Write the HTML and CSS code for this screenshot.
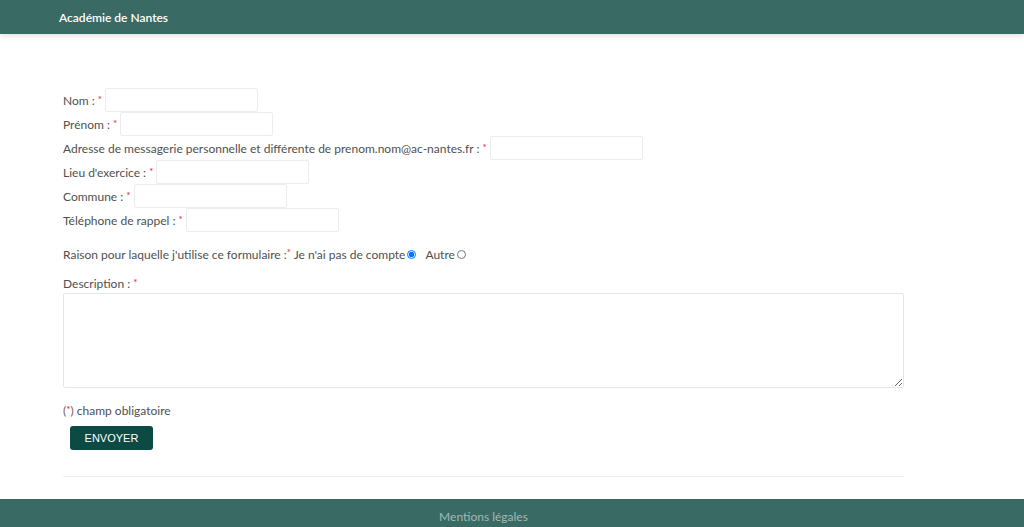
FILE: index.html
```html
<!DOCTYPE html>
<html lang="fr">
<head>
<meta charset="utf-8">
<title>Académie de Nantes</title>
<link rel="stylesheet" href="styles.css">
</head>
<body>
<header class="topbar">
  <span class="brand">Académie de Nantes</span>
</header>
<main class="page">
  <form class="form">
    <div class="row"><label>Nom : <span class="req">*</span></label><input type="text" class="field"></div>
    <div class="row"><label>Prénom : <span class="req">*</span></label><input type="text" class="field"></div>
    <div class="row"><label>Adresse de messagerie personnelle et différente de prenom.nom@ac-nantes.fr : <span class="req">*</span></label><input type="text" class="field"></div>
    <div class="row"><label>Lieu d'exercice : <span class="req">*</span></label><input type="text" class="field"></div>
    <div class="row"><label>Commune : <span class="req">*</span></label><input type="text" class="field"></div>
    <div class="row"><label>Téléphone de rappel : <span class="req">*</span></label><input type="text" class="field"></div>
    <div class="reason">Raison pour laquelle j'utilise ce formulaire :<span class="req">*</span> Je n'ai pas de compte<input type="radio" name="r" class="radio" checked><span class="opt">Autre</span><input type="radio" name="r" class="radio"></div>
    <div class="desc-label">Description : <span class="req">*</span></div>
    <textarea class="desc"></textarea>
    <div class="note"><span class="paren">(</span><span class="req">*</span><span class="paren">)</span> champ obligatoire</div>
    <div class="actions"><button type="button" class="send">ENVOYER</button></div>
    <hr class="sep">
  </form>
</main>
<footer class="footer"><div class="footer-inner"><span class="legal">Mentions légales</span></div></footer>
</body>
</html>
```
FILE: styles.css
```css
html, body {
  margin: 0;
  padding: 0;
  background: #fff;
  font-family: Lato, "Open Sans", sans-serif;
  font-size: 12px;
  color: #505050;
}
.topbar {
  height: 34px;
  background: #396a63;
  display: flex;
  align-items: center;
  padding-left: 59px;
  box-shadow: 0 2px 6px rgba(0,0,0,0.12);
  position: relative;
}
.brand {
  color: #fff;
  font-size: 12px;
  font-weight: 600;
}
.page {
  padding: 54px 0 0 63px;
  width: 841px;
}
.form {
  display: flex;
  flex-direction: column;
}
.row {
  display: flex;
  align-items: center;
  height: 24px;
}
.row label {
  white-space: pre;
  margin-right: 3px;
}
.req {
  color: #e0282a;
  font-size: 10px;
  position: relative;
  top: -2px;
}
.field {
  box-sizing: border-box;
  width: 153px;
  height: 24px;
  margin: 0;
  border: 1px solid #ececec;
  border-radius: 2px;
  background: #fff;
  padding: 0 4px;
  font: inherit;
}
.reason {
  display: flex;
  align-items: center;
  margin-top: 12px;
  height: 20px;
  white-space: pre;
}
.radio {
  width: 9px;
  height: 9px;
  margin: 0 3px 0 2px;
}
.opt {
  margin-left: 6px;
}
.desc-label {
  margin-top: 11px;
  height: 18px;
  line-height: 18px;
}
.desc {
  box-sizing: border-box;
  width: 841px;
  height: 95px;
  margin: 0;
  border: 1px solid #e6e6e6;
  border-radius: 2px;
  font: inherit;
  resize: both;
}
.note {
  margin-top: 14px;
  height: 18px;
  line-height: 18px;
}
.paren {
  color: #7a5a52;
}
.actions {
  padding-left: 7px;
  margin-top: 6px;
}
.send {
  width: 83px;
  height: 24px;
  background: #0e4a44;
  color: #fff;
  border: none;
  border-radius: 3px;
  font-family: "Liberation Sans", Arial, sans-serif;
  font-size: 11px;
  padding: 0;
}
.sep {
  margin: 26px 0 0 0;
  border: none;
  border-top: 1px solid #eee;
  width: 841px;
}
.footer {
  margin-top: 22px;
  height: 28px;
  background: #396a63;
}
.footer-inner {
  margin-left: 63px;
  width: 841px;
  height: 28px;
  display: flex;
  justify-content: center;
  align-items: flex-end;
}
.legal {
  color: #a3b8b4;
  font-size: 12px;
  line-height: 18px;
  padding-bottom: 1px;
}
```
